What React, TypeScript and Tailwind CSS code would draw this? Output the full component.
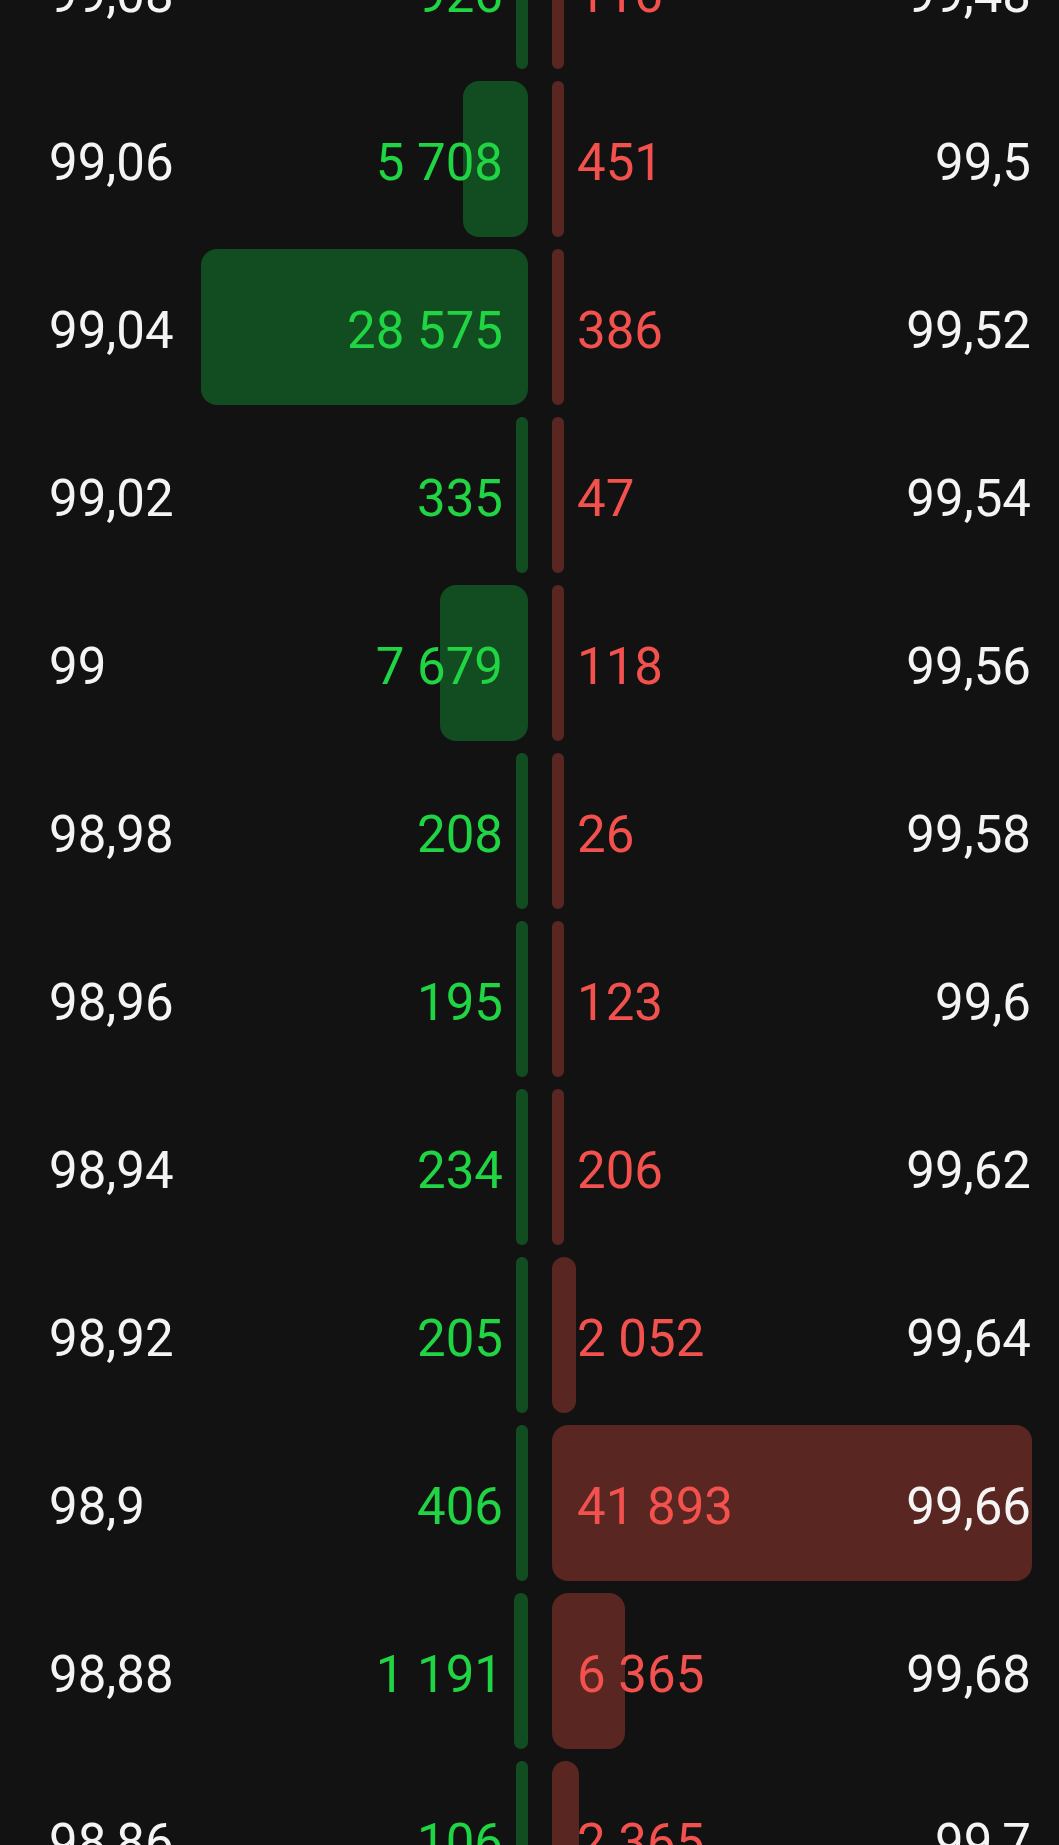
import React from "react";

type Row = { bidPrice: string; bid: number; ask: number; askPrice: string };

const rows: Row[] = [
  { bidPrice: "99,08", bid: 926, ask: 116, askPrice: "99,48" },
  { bidPrice: "99,06", bid: 5708, ask: 451, askPrice: "99,5" },
  { bidPrice: "99,04", bid: 28575, ask: 386, askPrice: "99,52" },
  { bidPrice: "99,02", bid: 335, ask: 47, askPrice: "99,54" },
  { bidPrice: "99", bid: 7679, ask: 118, askPrice: "99,56" },
  { bidPrice: "98,98", bid: 208, ask: 26, askPrice: "99,58" },
  { bidPrice: "98,96", bid: 195, ask: 123, askPrice: "99,6" },
  { bidPrice: "98,94", bid: 234, ask: 206, askPrice: "99,62" },
  { bidPrice: "98,92", bid: 205, ask: 2052, askPrice: "99,64" },
  { bidPrice: "98,9", bid: 406, ask: 41893, askPrice: "99,66" },
  { bidPrice: "98,88", bid: 1191, ask: 6365, askPrice: "99,68" },
  { bidPrice: "98,86", bid: 106, ask: 2365, askPrice: "99,7" },
];

const MAX = 41893;
const FULL = 480;

function barWidth(v: number) {
  return Math.max(12, (v / MAX) * FULL);
}

function fmt(v: number) {
  const s = String(v);
  return s.replace(/\B(?=(\d{3})+(?!\d))/g, "\u00a0");
}

export default function App() {
  return (
    <div
      className="w-[1059px] h-[1845px] overflow-hidden bg-[#121212] text-[51px] leading-none"
      style={{ fontFamily: "Roboto, 'Noto Sans', sans-serif" }}
    >
      <div className="flex flex-col gap-[12px] -mt-[87px]">
        {rows.map((r, i) => (
          <div key={i} className="flex h-[156px] shrink-0">
            <div className="relative w-[528px] flex items-center justify-between pl-[49px] pr-[25px] pt-[7px]">
              <div
                className="absolute right-0 top-0 bottom-0 rounded-[16px] bg-[#124d21]"
                style={{ width: barWidth(r.bid) }}
              />
              <span className="relative text-[#f4f4f4]">{r.bidPrice}</span>
              <span className="relative text-[#20d443]">{fmt(r.bid)}</span>
            </div>
            <div className="w-[24px]" />
            <div className="relative w-[480px] flex items-center justify-between pl-[25px] pr-[1px] pt-[7px]">
              <div
                className="absolute left-0 top-0 bottom-0 rounded-[16px] bg-[#5a2622]"
                style={{ width: barWidth(r.ask) }}
              />
              <span className="relative text-[#f2514e]">{fmt(r.ask)}</span>
              <span className="relative text-[#f4f4f4]">{r.askPrice}</span>
            </div>
          </div>
        ))}
      </div>
    </div>
  );
}
